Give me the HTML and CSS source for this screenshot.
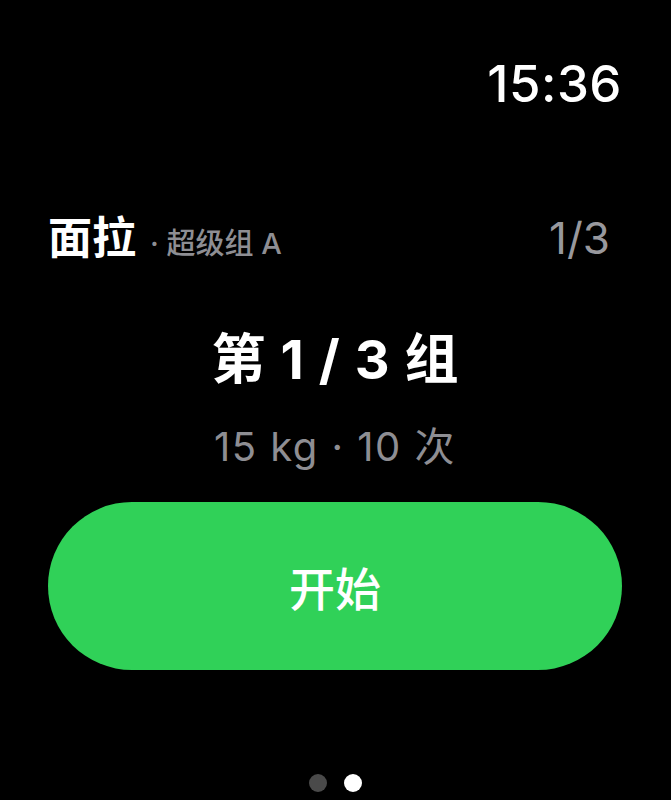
FILE: index.html
```html
<!DOCTYPE html>
<html>
<head>
  <title>面拉</title>
  <link rel="stylesheet" href="styles.css">
</head>
<body>
  <div class="screen">
    <!-- status bar -->
    <div class="status-bar">
      <span class="clock">15:36</span>
    </div>

    <!-- exercise header -->
    <div class="exercise-row">
      <div class="exercise-title">
        <span class="exercise-name">面拉</span>
        <span class="exercise-group">· 超级组 A</span>
      </div>
      <span class="exercise-count">1/3</span>
    </div>

    <!-- current set -->
    <div class="set-info">
      <div class="set-title">第1/3组</div>
      <div class="set-detail">15 kg · 10 次</div>
    </div>

    <button class="start-button">开始</button>

    <!-- page indicator -->
    <div class="page-dots">
      <span class="dot"></span>
      <span class="dot active"></span>
    </div>
  </div>
</body>
</html>
```

FILE: styles.css
```css
/* watch screen, dark background */
body {
  margin: 0;
  background-color: #000;
  color: #fff;
  font-family: Inter, "Noto Sans CJK SC", sans-serif;
}

.screen {
  width: 671px;
  height: 800px;
  box-sizing: border-box;
  padding: 0 49px 0 48px;
  display: flex;
  flex-direction: column;
  overflow: hidden;
}

.status-bar {
  display: flex;
  justify-content: flex-end;
  padding-top: 56px;
}
.clock {
  font-size: 51px;
  font-weight: 500;
  line-height: 56px;
  letter-spacing: 0.5px;
}

/* exercise name + group */
.exercise-row {
  display: flex;
  justify-content: space-between;
  align-items: baseline;
  margin-top: 98px;
  padding-right: 12px;
}
.exercise-title {
  display: flex;
  align-items: baseline;
  gap: 14px;
}
.exercise-name {
  font-size: 44px;
  font-weight: 700;
  line-height: 56px;
}
.exercise-group {
  font-size: 29px;
  font-weight: 500;
  color: #8e8e93;
}
.exercise-count {
  font-size: 44px;
  font-weight: 400;
  color: #98989d;
}

/* set number and load */
.set-info {
  display: flex;
  flex-direction: column;
  align-items: center;
  margin-top: 60px;
}
.set-title {
  font-size: 54px;
  font-weight: 700;
  line-height: 68px;
  letter-spacing: 15px;
  padding-left: 15px; /* balance the trailing letter-spacing */
}
.set-detail {
  margin-top: 28px;
  font-size: 40px;
  font-weight: 400;
  line-height: 50px;
  letter-spacing: 1.5px;
  color: #8e8e93;
}

.start-button {
  margin-top: 30px;
  height: 168px;
  border: none;
  border-radius: 84px;
  background-color: #30d158;
  color: #fff;
  font-family: inherit;
  font-size: 46px;
  font-weight: 500;
  cursor: pointer;
}

.page-dots {
  display: flex;
  justify-content: center;
  gap: 17px;
  margin-top: 104px;
}
.dot {
  width: 18px;
  height: 18px;
  border-radius: 50%;
  background-color: #4a4a4a;
}
.dot.active {
  background-color: #fff;
}
```
